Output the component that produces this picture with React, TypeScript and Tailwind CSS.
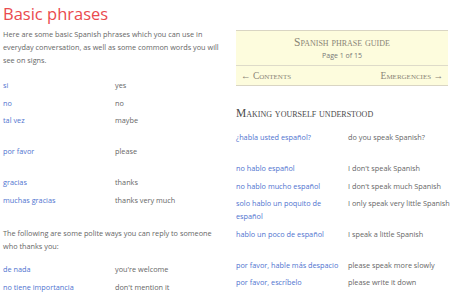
const sans = { fontFamily: '"Open Sans", "Liberation Sans", sans-serif' };
const serif = { fontFamily: '"Liberation Serif", "DejaVu Serif", serif' };

type Row = [string, string] | null;

const basics: Row[] = [
  ["si", "yes"],
  ["no", "no"],
  ["tal vez", "maybe"],
  null,
  ["por favor", "please"],
  null,
  ["gracias", "thanks"],
  ["muchas gracias", "thanks very much"],
];

const replies: Row[] = [
  ["de nada", "you're welcome"],
  ["no tiene importancia", "don't mention it"],
];

const understood: Row[] = [
  ["¿habla usted español?", "do you speak Spanish?"],
  null,
  ["no hablo español", "I don't speak Spanish"],
  ["no hablo mucho español", "I don't speak much Spanish"],
  ["solo hablo un poquito de español", "I only speak very little Spanish"],
  ["hablo un poco de español", "I speak a little Spanish"],
  null,
  ["por favor, hable más despacio", "please speak more slowly"],
  ["por favor, escríbelo", "please write it down"],
];

function PhraseTable({ rows }: { rows: Row[] }) {
  return (
    <div className="flex flex-col">
      {rows.map((r, i) =>
        r ? (
          <div key={i} className="flex py-[2.25px] text-[7.3px] leading-[13px]">
            <div className="w-[112px] shrink-0 pr-[6px] text-[#4f73cf]">{r[0]}</div>
            <div className="flex-1 whitespace-nowrap text-[#666]">{r[1]}</div>
          </div>
        ) : (
          <div key={i} className="h-[13.5px]" />
        )
      )}
    </div>
  );
}

export default function App() {
  return (
    <div className="flex h-[292px] w-[450px] overflow-hidden bg-white" style={sans}>
      <div className="w-[224px] shrink-0 pl-[3px]">
        <h1 className="text-[16.5px] leading-[28px] text-[#ea4a4e]">Basic phrases</h1>
        <p className="mb-[9.75px] text-[7.3px] leading-[13px] text-[#666]">
          Here are some basic Spanish phrases which you can use in everyday conversation, as well as
          some common words you will see on signs.
        </p>
        <PhraseTable rows={basics} />
        <p className="mt-[18px] mb-[8px] pr-[8px] text-[7.3px] leading-[13px] text-[#666]">
          The following are some polite ways you can reply to someone who thanks you:
        </p>
        <PhraseTable rows={replies} />
      </div>

      <div className="ml-[12px] w-[212px] shrink-0 pt-[30px]">
        <div className="border-y border-[#d9d5c3] bg-[#fdfcdd]">
          <div className="pt-[4px] pb-[3px] text-center">
            <div className="text-[11.5px] leading-[15px] text-[#8a8476] [font-variant:small-caps]" style={serif}>
              Spanish phrase guide
            </div>
            <div className="text-[7px] leading-[12px] text-[#777]">Page 1 of 15</div>
          </div>
          <div
            className="flex justify-between border-t border-[#dedbc9] px-[5px] py-[3.5px] text-[9.5px] leading-[12px] text-[#8a8476] [font-variant:small-caps]"
            style={serif}
          >
            <span>← Contents</span>
            <span>Emergencies →</span>
          </div>
        </div>
        <h2
          className="mt-[19px] mb-[8px] text-[11.5px] leading-[16px] text-[#4a4a4a] [font-variant:small-caps]"
          style={serif}
        >
          Making yourself understood
        </h2>
        <PhraseTable rows={understood} />
      </div>
    </div>
  );
}
